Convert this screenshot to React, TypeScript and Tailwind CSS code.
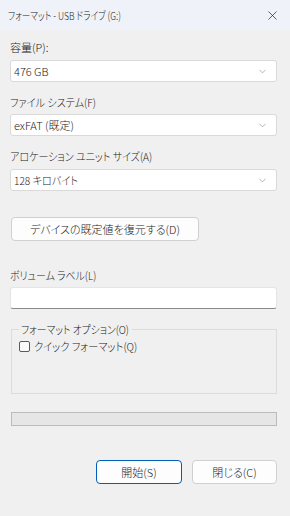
import { ChevronDown, X } from "lucide-react";

const font = {
  fontFamily: '"Noto Sans CJK JP", "Noto Sans", sans-serif',
  fontFeatureSettings: '"palt"',
};

const Narrow = ({ children, className = "" }: { children: string; className?: string }) => (
  <span className={`inline-block origin-left whitespace-nowrap ${className}`}>{children}</span>
);

const Select = ({ value, className = "" }: { value: string; className?: string }) => (
  <div className="h-[22px] w-full bg-white border border-[#d9d9d9] rounded-[3px] flex items-center justify-between pl-[3px] pr-[8px] text-[11px] text-[#1b1b1b]">
    <Narrow className={className}>{value}</Narrow>
    <ChevronDown size={11} strokeWidth={1.2} className="text-[#7a7a7a]" />
  </div>
);

const Label = ({ children, className = "", scale = "" }: { children: string; className?: string; scale?: string }) => (
  <div className={`h-[16px] leading-[16px] text-[11px] text-[#1b1b1b] ${className}`}>
    <Narrow className={scale}>{children}</Narrow>
  </div>
);

const App = () => {
  return (
    <div className="w-[290px] h-[516px] bg-[#f0f0f0] flex flex-col font-light" style={font}>
      {/* title bar */}
      <div className="h-[30px] bg-[#eff3f9] flex items-center justify-between pl-[8px] pr-[10px]">
        <span className="text-[11px] text-[#1b1b1b]">
          <Narrow className="scale-x-[0.78]">フォーマット - USB ドライブ (G:)</Narrow>
        </span>
        <X size={15} strokeWidth={1.1} className="text-[#1b1b1b]" />
      </div>

      <div className="flex flex-col pl-[10px] pr-[13px]">
        <Label className="mt-[9px] mb-[5px]">容量(P):</Label>
        <Select value="476 GB" />

        <Label className="mt-[12px] mb-[4px]" scale="scale-x-[0.92]">ファイル システム(F)</Label>
        <Select value="exFAT (既定)" />

        <Label className="mt-[12px] mb-[5px]" scale="scale-x-[0.91]">アロケーション ユニット サイズ(A)</Label>
        <Select value="128 キロバイト" className="scale-x-[0.92]" />

        <button className="mt-[26px] ml-[1px] w-[188px] h-[24px] bg-[#fdfdfd] border border-[#d0d0d0] rounded-[4px] text-[11px] text-[#1b1b1b]">
          デバイスの既定値を復元する(D)
        </button>

        <Label className="mt-[26px] mb-[4px]" scale="scale-x-[0.9]">ボリューム ラベル(L)</Label>
        <div className="h-[22px] w-full bg-white border border-[#e5e5e5] border-b-[#8a8a8a] rounded-[3px]" />

        <fieldset className="mt-[12px] ml-[1px] h-[73px] border border-[#dcdcdc] px-[7px]">
          <legend className="text-[11px] text-[#1b1b1b] px-[2px] leading-[16px] w-[113px] overflow-visible">
            <Narrow className="scale-x-[0.89]">フォーマット オプション(O)</Narrow>
          </legend>
          <label className="flex items-center gap-[4px] mt-[1px] text-[11px] text-[#1b1b1b]">
            <span className="w-[11px] h-[11px] border border-[#5a5a5a] rounded-[2px] bg-[#fafafa]" />
            <Narrow className="scale-x-[0.93]">クイック フォーマット(Q)</Narrow>
          </label>
        </fieldset>

        <div className="mt-[18px] ml-[1px] h-[14px] bg-[#e6e6e6] border border-[#bcbcbc]" />

        <div className="mt-[34px] flex justify-end gap-[10px]">
          <button className="w-[86px] h-[24px] bg-[#fdfdfd] border border-[#005fb8] rounded-[4px] text-[11px] text-[#1b1b1b]">
            開始(S)
          </button>
          <button className="w-[85px] h-[24px] bg-[#fdfdfd] border border-[#d0d0d0] rounded-[4px] text-[11px] text-[#1b1b1b]">
            閉じる(C)
          </button>
        </div>
      </div>
    </div>
  );
};

export default App;
